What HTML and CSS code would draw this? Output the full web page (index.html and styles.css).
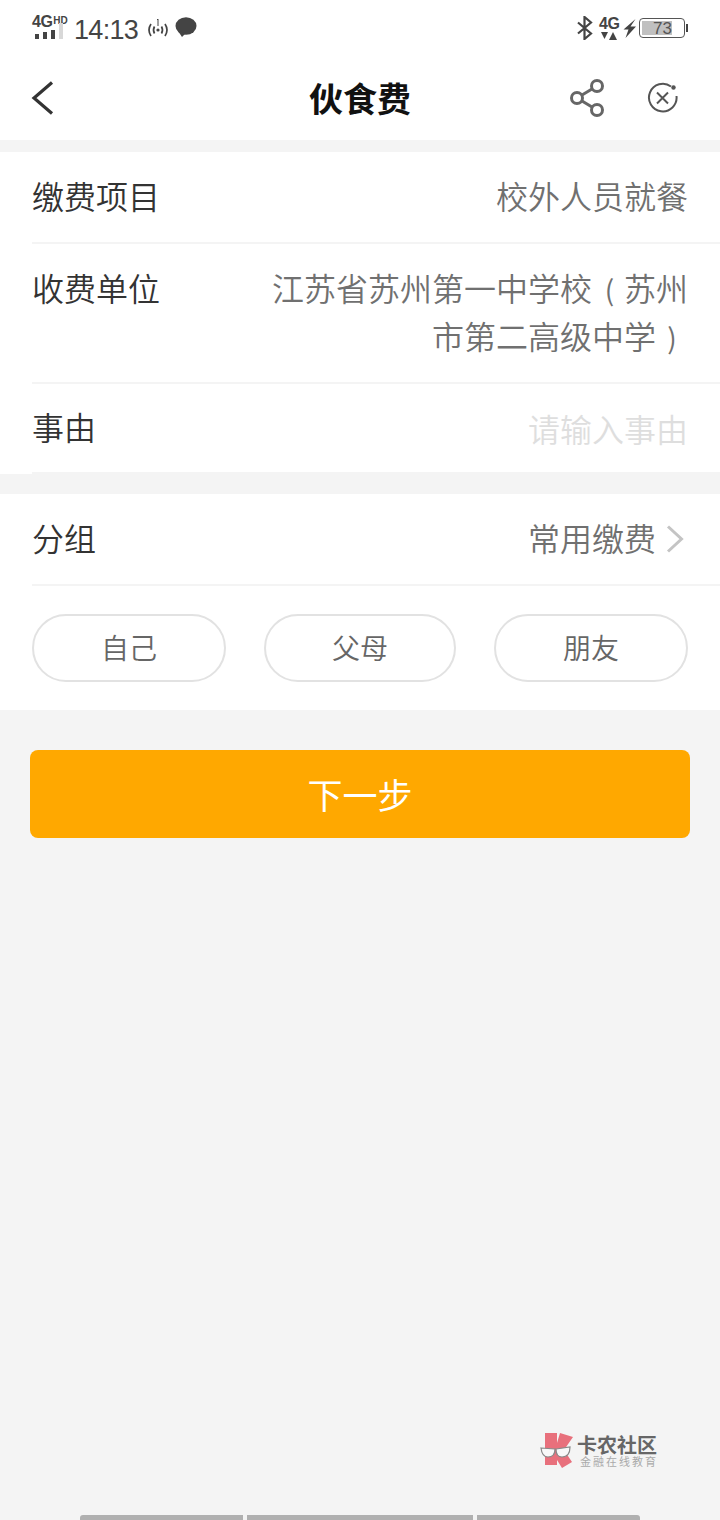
FILE: index.html
```html
<!DOCTYPE html>
<html lang="zh">
<head>
  <meta charset="UTF-8">
  <meta name="viewport" content="width=device-width, initial-scale=1.0">
  <title>伙食费</title>
  <link rel="stylesheet" href="styles.css">
</head>
<body>
  <div class="app">
    <div class="status-bar">
      <div class="status-left">
        <div class="signal">
          <div class="signal-text">4G<span class="signal-hd">HD</span></div>
          <svg class="signal-bars" width="32" height="16" viewBox="0 0 32 16">
            <rect x="3" y="11" width="4" height="5" fill="#444"/>
            <rect x="11" y="9" width="4" height="7" fill="#444"/>
            <rect x="19" y="7" width="4" height="9" fill="#444"/>
            <rect x="27" y="0" width="4" height="16" fill="#d8d8d8"/>
          </svg>
        </div>
        <span class="clock">14:13</span>
        <svg class="hotspot" width="22" height="20" viewBox="0 0 22 20" fill="none" stroke="#444" stroke-width="1.700">
          <path d="M4 6Q0 12 4 18"/><path d="M7.500 8.500Q5.500 12 7.500 15.500"/>
          <path d="M14.500 8.500Q16.500 12 14.500 15.500"/><path d="M18 6Q22 12 18 18"/>
          <circle cx="11" cy="12" r="1.600" fill="#444" stroke="none"/>
          <path d="M10 2L11 1V8" stroke-width="1"/>
        </svg>
        <svg class="bubble" width="22" height="21" viewBox="0 0 22 21">
          <ellipse cx="11" cy="9" rx="10.500" ry="8.800" fill="#444"/>
          <path d="M3 14L7 20L11 16Z" fill="#444"/>
        </svg>
      </div>
      <div class="status-right">
        <svg class="bt" width="18" height="24" viewBox="0 0 18 24" fill="none" stroke="#444" stroke-width="2.200">
          <path d="M2 6.500L15 17.500L8.500 23V1L15 6.500L2 17.500"/>
        </svg>
        <div class="net">
          <span class="net-text">4G</span>
          <svg class="net-arrows" width="18" height="8" viewBox="0 0 18 8" fill="#444">
            <path d="M2 0H9L5.500 7Z"/><path d="M10 8H18L14 0Z"/>
          </svg>
        </div>
        <svg class="bolt" width="13" height="19" viewBox="0 0 13 19" preserveAspectRatio="none"><path d="M12.500 0L0.500 10.500H5.500L2.500 19L13 7.500H7.500Z" fill="#444"/></svg>
        <div class="battery">
          <div class="battery-body"><span class="battery-level">73</span></div>
          <div class="battery-cap"></div>
        </div>
      </div>
    </div>

    <header class="nav-bar">
      <svg class="nav-back" width="24" height="34" viewBox="0 0 24 34" fill="none" stroke="#333" stroke-width="3.200">
        <path d="M21 1.500L3 17L21 32.500"/>
      </svg>
      <h1 class="nav-title">伙食费</h1>
      <div class="nav-actions">
        <svg width="36" height="40" viewBox="0 0 36 40" fill="none" stroke="#666" stroke-width="3">
          <circle cx="27" cy="8" r="5.500"/><circle cx="7" cy="20" r="5.500"/><circle cx="27" cy="32" r="5.500"/>
          <path d="M12 17L22 11"/><path d="M12 23L22 29"/>
        </svg>
        <svg width="32" height="32" viewBox="0 0 32 32" fill="none" stroke="#555" stroke-width="2">
          <path d="M24 4.500A13.800 13.800 0 1 0 29.500 14"/>
          <path d="M10 10.500L21 21.500M21 10.500L10 21.500"/>
          <circle cx="26.500" cy="5.500" r="2.200" fill="#555" stroke="none"/>
        </svg>
      </div>
    </header>

    <section class="card card-form">
      <div class="row row-first">
        <span class="row-label">缴费项目</span>
        <span class="row-value">校外人员就餐</span>
      </div>
      <div class="row row-multi">
        <span class="row-label">收费单位</span>
        <div class="row-value">
          <div class="value-line">江苏省苏州第一中学校<span class="paren paren-open">(</span>苏州</div>
          <div class="value-line">市第二高级中学<span class="paren">)</span></div>
        </div>
      </div>
      <div class="row row-last">
        <span class="row-label">事由</span>
        <span class="row-value row-placeholder">请输入事由</span>
      </div>
    </section>

    <section class="card card-group">
      <div class="row row-first">
        <span class="row-label">分组</span>
        <span class="row-value row-link">常用缴费
          <svg class="chevron" width="18" height="28" viewBox="0 0 18 28" fill="none" stroke="#c4c4c4" stroke-width="3"><path d="M2 1.500L15.500 14L2 26.500"/></svg>
        </span>
      </div>
      <div class="chips">
        <span class="chip chip-a">自己</span>
        <span class="chip chip-b">父母</span>
        <span class="chip chip-a">朋友</span>
      </div>
    </section>

    <button class="next-btn">下一步</button>

    <div class="spacer"></div>

    <div class="watermark">
      <svg width="34" height="37" viewBox="0 0 34 37">
        <path d="M5 1H17V11L20 1L33 5L24 18L32 30L22 36L17 28V33H5Z" fill="#e8707c"/>
        <path d="M1 16L15 17Q15 25 8 25Q2 25 1 16Z" fill="#f8f8f8" stroke="#888" stroke-width="1.200"/>
        <path d="M16 17L30 15Q30 25 22 25Q16 25 16 17Z" fill="#f8f8f8" stroke="#888" stroke-width="1.200"/>
      </svg>
      <div class="watermark-text">
        <span class="wm-title">卡农社区</span>
        <span class="wm-sub">金融在线教育</span>
      </div>
    </div>

    <div class="bottom-tabs">
      <span class="tab tab-1"></span>
      <span class="tab tab-2"></span>
      <span class="tab tab-3"></span>
    </div>
  </div>
</body>
</html>
```

FILE: styles.css
```css
* { box-sizing: border-box; margin: 0; padding: 0; }
body { width: 720px; height: 1520px; overflow: hidden; background: #f4f4f4; font-family: "Noto Sans CJK SC", "Liberation Sans", sans-serif; color: #333; }
.app { display: flex; flex-direction: column; height: 1520px; }

.status-bar { height: 56px; background: #fff; display: flex; justify-content: space-between; padding: 14px 32px 0 32px; }
.status-left { display: flex; align-items: flex-start; }
.signal { width: 32px; margin-top: 1px; }
.signal-text { height: 8px; font: bold 16px/11px "Liberation Sans", sans-serif; color: #444; white-space: nowrap; letter-spacing: -0.500px; }
.signal-hd { font-size: 10px; vertical-align: 3px; margin-left: 1px; letter-spacing: 0; }
.signal-bars { display: block; }
.clock { width: 64px; font: 27px/32px "Liberation Sans", sans-serif; color: #444; margin-left: 10px; letter-spacing: -0.700px; white-space: nowrap; }
.hotspot { margin: 4px 0 0 9px; }
.bubble { margin: 3px 0 0 6px; }
.status-right { display: flex; align-items: flex-start; }
.bt { margin-top: 2px; }
.net { display: flex; flex-direction: column; width: 18px; margin: 4px 0 0 5px; }
.net-text { font: bold 16px/12px "Liberation Sans", sans-serif; color: #444; letter-spacing: -0.500px; }
.net-arrows { margin-top: 2px; }
.bolt { margin: 5px 0 0 6px; }
.battery { display: flex; align-items: center; margin: 4px 0 0 3px; height: 20px; }
.battery-body { width: 46px; height: 20px; border: 1px solid #555; border-radius: 4px; padding: 2px; }
.battery-level { display: block; width: 30px; height: 14px; background: #c0c0c0; font: 17px/15px "Liberation Sans", sans-serif; color: #555; text-align: right; }
.battery-cap { width: 2px; height: 8px; background: #444; margin-left: 1px; }

.nav-bar { height: 84px; background: #fff; position: relative; display: flex; align-items: center; justify-content: space-between; padding: 0 41px 0 31px; margin-bottom: 12px; }
.nav-title { position: absolute; left: 0; right: 0; top: 17px; text-align: center; font-size: 34px; line-height: 50px; font-weight: 700; color: #111; pointer-events: none; }
.nav-actions { display: flex; align-items: center; gap: 41px; }

.card { background: #fff; }
.card-form { margin-bottom: 20px; }
.row { display: flex; justify-content: space-between; margin-left: 32px; padding-right: 32px; border-bottom: 2px solid #f4f4f4; font-size: 32px; line-height: 48px; font-weight: 350; }
.row-first { height: 92px; align-items: center; padding-bottom: 4px; }
.row-multi { height: 140px; padding-top: 19px; }
.row-last { height: 90px; align-items: center; padding-bottom: 4px; }
.row-label { color: #333; flex: none; }
.row-value { color: #707070; text-align: right; }
.value-line { white-space: nowrap; }
.paren { display: inline-block; width: 32px; text-align: center; font-size: 28px; line-height: 28px; font-weight: 400; }
.paren-open { padding-left: 3px; }
.row-placeholder { color: #dedede; margin-top: 4px; }
.row-link { display: flex; align-items: center; margin-right: 4px; gap: 10px; }
.chevron { margin-top: 4px; }

.chips { display: flex; justify-content: space-between; padding: 28px 32px; }
.chip { height: 68px; border: 2px solid #e2e2e2; border-radius: 34px; display: flex; align-items: center; justify-content: center; font-size: 28px; font-weight: 350; color: #666; padding-bottom: 2px; }
.chip-a { width: 194px; }
.chip-b { width: 192px; }

.next-btn { margin: 40px 30px 0; height: 88px; background: #ffa800; color: #fff; border: none; border-radius: 8px; font-family: inherit; font-size: 35px; padding-bottom: 2px; }
.spacer { flex: 1; }

.watermark { display: flex; align-items: center; justify-content: flex-end; gap: 3px; padding-right: 62px; margin-bottom: 46px; }
.watermark-text { display: flex; flex-direction: column; align-items: flex-start; }
.wm-title { font-size: 20px; line-height: 21px; font-weight: 700; color: #666; }
.wm-sub { font-size: 11px; line-height: 13px; color: #aaa; letter-spacing: 2px; margin-left: 3px; }

.bottom-tabs { display: flex; gap: 4px; padding-left: 80px; height: 5px; }
.tab { height: 5px; background: #b0b0b0; }
.tab-1 { width: 163px; border-top-left-radius: 3px; }
.tab-2 { width: 226px; }
.tab-3 { width: 163px; border-top-right-radius: 3px; }
```
